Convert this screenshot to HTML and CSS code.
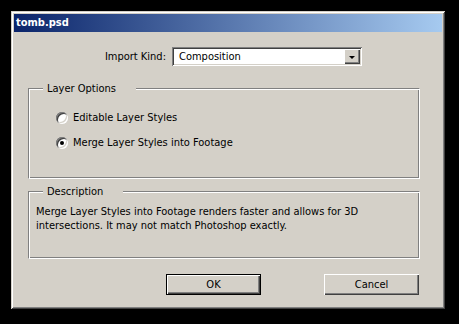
FILE: index.html
```html
<!DOCTYPE html>
<html lang="en">
<head>
    <meta charset="UTF-8">
    <meta name="viewport" content="width=device-width, initial-scale=1.0">
    <title>tomb.psd</title>
    <link rel="stylesheet" href="styles.css">
</head>
<body>
    <div class="window">
        <div class="titlebar">tomb.psd</div>

        <div class="import-row">
            <label for="kind">Import Kind:</label>
            <div class="combo" id="kind">
                <span class="combo-text">Composition</span>
                <span class="combo-btn"><span class="arrow"></span></span>
            </div>
        </div>

        <fieldset class="group group-layers">
            <legend>Layer Options</legend>
            <div class="radio-row">
                <span class="radio"></span>
                <span>Editable Layer Styles</span>
            </div>
            <div class="radio-row">
                <span class="radio checked"></span>
                <span>Merge Layer Styles into Footage</span>
            </div>
        </fieldset>

        <fieldset class="group group-desc">
            <legend>Description</legend>
            <p class="desc">Merge Layer Styles into Footage renders faster and allows for 3D intersections. It may not match Photoshop exactly.</p>
        </fieldset>

        <div class="buttons">
            <button class="btn default">OK</button>
            <button class="btn">Cancel</button>
        </div>
    </div>
</body>
</html>
```

FILE: styles.css
```css
body { margin: 0; background-color: #000; font-family: "DejaVu Sans Condensed", "DejaVu Sans", sans-serif; font-size: 11px; color: #000; }
.window { margin: 11px; width: 430px; height: 294px; padding: 2px; background-color: #d4d0c8;
    box-shadow: inset 1px 1px #d4d0c8, inset -1px -1px #404040, inset 2px 2px #fff, inset -2px -2px #808080; }
.titlebar { margin: 1px 1px 0 1px; height: 18px; line-height: 18px; padding-left: 2px; color: #fff; font-weight: bold;
    background: linear-gradient(to right, #0a246a, #a6caf0); }

.import-row { display: flex; justify-content: flex-end; align-items: center; gap: 6px; margin-top: 15px; padding-right: 81px; }
.combo { display: flex; align-items: center; width: 186px; height: 15px; padding: 2px; background-color: #fff;
    box-shadow: inset 1px 1px #808080, inset -1px -1px #fff, inset 2px 2px #404040, inset -2px -2px #d4d0c8; }
.combo-text { flex: 1; padding-left: 5px; }
.combo-btn { display: flex; align-items: center; justify-content: center; width: 16px; height: 15px; background-color: #d4d0c8;
    box-shadow: inset 1px 1px #fff, inset -1px -1px #404040, inset -2px -2px #808080; }
.arrow { width: 0; height: 0; border-left: 3px solid transparent; border-right: 3px solid transparent; border-top: 3px solid #000; margin-top: 1px; }

.group { margin: 0 23px 0 15px; padding: 0; border: 1px solid; border-color: #808080 #fff #fff #808080;
    box-shadow: inset 1px 1px #fff, inset -1px -1px #808080; }
.group legend { padding: 0 20px 0 4px; line-height: 13px; background-color: #d4d0c8; }
.group-layers { margin-top: 16px; padding: 16px 0 29px 27px; }
.group-layers legend { margin-left: -13px; }
.group-desc { margin-top: 6px; padding: 7px 0 25px 7px; }
.group-desc legend { margin-left: 7px; }

.radio-row { display: flex; align-items: center; gap: 5px; height: 13px; }
.radio-row + .radio-row { margin-top: 12px; }
.radio { position: relative; width: 12px; height: 12px; border-radius: 50%; background-color: #fff;
    box-shadow: inset 1px 1px #808080, inset -1px -1px #fff, inset 2px 2px #404040, inset -2px -2px #d4d0c8; }
.radio.checked::after { content: ""; position: absolute; left: 4px; top: 4px; width: 4px; height: 4px; border-radius: 50%; background-color: #000; }

.desc { margin: 0; line-height: 14px; }

.buttons { display: flex; justify-content: flex-end; gap: 63px; margin-top: 15px; padding-right: 24px; }
.btn { width: 95px; height: 21px; padding: 0; border: none; font-family: inherit; font-size: 11px; color: #000; background-color: #d4d0c8;
    box-shadow: inset 1px 1px #fff, inset -1px -1px #404040, inset -2px -2px #808080; }
.btn.default { box-shadow: inset 0 0 0 1px #000, inset 2px 2px #fff, inset -2px -2px #404040, inset -3px -3px #808080; }
```
